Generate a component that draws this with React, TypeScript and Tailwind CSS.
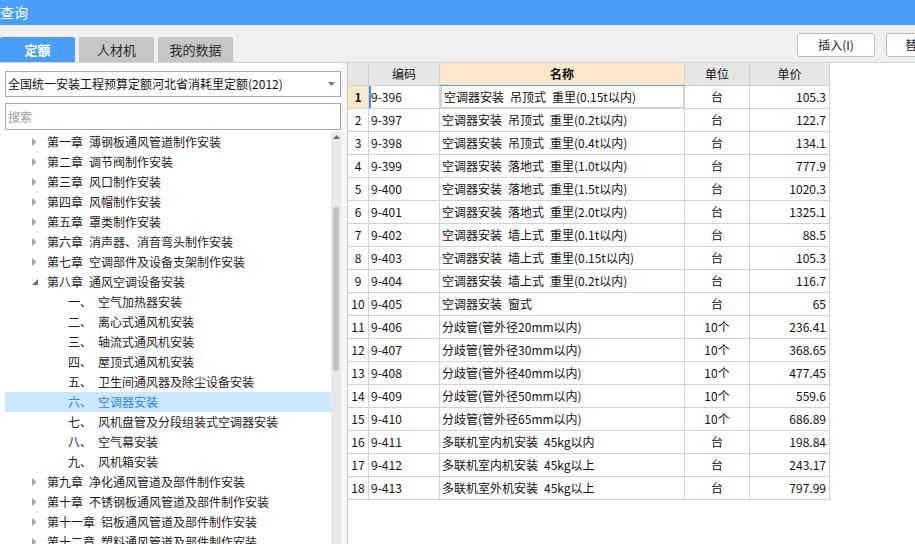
import React from 'react';

const FONT = { fontFamily: '"Noto Sans CJK SC", "Liberation Sans", sans-serif' };

type Row = { code: string; name: string; unit: string; price: string };

const rows: Row[] = [
  { code: '9-396', name: '空调器安装 吊顶式 重里(0.15t以内)', unit: '台', price: '105.3' },
  { code: '9-397', name: '空调器安装 吊顶式 重里(0.2t以内)', unit: '台', price: '122.7' },
  { code: '9-398', name: '空调器安装 吊顶式 重里(0.4t以内)', unit: '台', price: '134.1' },
  { code: '9-399', name: '空调器安装 落地式 重里(1.0t以内)', unit: '台', price: '777.9' },
  { code: '9-400', name: '空调器安装 落地式 重里(1.5t以内)', unit: '台', price: '1020.3' },
  { code: '9-401', name: '空调器安装 落地式 重里(2.0t以内)', unit: '台', price: '1325.1' },
  { code: '9-402', name: '空调器安装 墙上式 重里(0.1t以内)', unit: '台', price: '88.5' },
  { code: '9-403', name: '空调器安装 墙上式 重里(0.15t以内)', unit: '台', price: '105.3' },
  { code: '9-404', name: '空调器安装 墙上式 重里(0.2t以内)', unit: '台', price: '116.7' },
  { code: '9-405', name: '空调器安装 窗式', unit: '台', price: '65' },
  { code: '9-406', name: '分歧管(管外径20mm以内)', unit: '10个', price: '236.41' },
  { code: '9-407', name: '分歧管(管外径30mm以内)', unit: '10个', price: '368.65' },
  { code: '9-408', name: '分歧管(管外径40mm以内)', unit: '10个', price: '477.45' },
  { code: '9-409', name: '分歧管(管外径50mm以内)', unit: '10个', price: '559.6' },
  { code: '9-410', name: '分歧管(管外径65mm以内)', unit: '10个', price: '686.89' },
  { code: '9-411', name: '多联机室内机安装 45kg以内', unit: '台', price: '198.84' },
  { code: '9-412', name: '多联机室内机安装 45kg以上', unit: '台', price: '243.17' },
  { code: '9-413', name: '多联机室外机安装 45kg以上', unit: '台', price: '797.99' },
];

type TreeItem = { label: string; text: string; level: 0 | 1; expanded?: boolean; selected?: boolean };

const tree: TreeItem[] = [
  { label: '第一章', text: '薄钢板通风管道制作安装', level: 0 },
  { label: '第二章', text: '调节阀制作安装', level: 0 },
  { label: '第三章', text: '风口制作安装', level: 0 },
  { label: '第四章', text: '风帽制作安装', level: 0 },
  { label: '第五章', text: '罩类制作安装', level: 0 },
  { label: '第六章', text: '消声器、消音弯头制作安装', level: 0 },
  { label: '第七章', text: '空调部件及设备支架制作安装', level: 0 },
  { label: '第八章', text: '通风空调设备安装', level: 0, expanded: true },
  { label: '一、', text: '空气加热器安装', level: 1 },
  { label: '二、', text: '离心式通风机安装', level: 1 },
  { label: '三、', text: '轴流式通风机安装', level: 1 },
  { label: '四、', text: '屋顶式通风机安装', level: 1 },
  { label: '五、', text: '卫生间通风器及除尘设备安装', level: 1 },
  { label: '六、', text: '空调器安装', level: 1, selected: true },
  { label: '七、', text: '风机盘管及分段组装式空调器安装', level: 1 },
  { label: '八、', text: '空气幕安装', level: 1 },
  { label: '九、', text: '风机箱安装', level: 1 },
  { label: '第九章', text: '净化通风管道及部件制作安装', level: 0 },
  { label: '第十章', text: '不锈钢板通风管道及部件制作安装', level: 0 },
  { label: '第十一章', text: '铝板通风管道及部件制作安装', level: 0 },
  { label: '第十二章', text: '塑料通风管道及部件制作安装', level: 0 },
];

function TreeRow({ item }: { item: TreeItem }) {
  if (item.level === 1) {
    return (
      <div
        className={`h-[20px] flex items-center text-[12px] shrink-0 ${
          item.selected ? 'bg-[#cce8ff] text-[#2f86e0]' : 'text-[#1e1e1e]'
        }`}
      >
        <span className="w-[30px] ml-[63px]">{item.label}</span>
        <span>{item.text}</span>
      </div>
    );
  }
  return (
    <div className="h-[20px] flex items-center text-[12px] text-[#1e1e1e] shrink-0">
      <span className="w-[15px] ml-[27px] flex items-center">
        {item.expanded ? (
          <svg width="6" height="6" viewBox="0 0 6 6">
            <polygon points="6,0 6,6 0,6" fill="#6b6b6b" />
          </svg>
        ) : (
          <svg width="5" height="8" viewBox="0 0 5 8">
            <polygon points="0,0 4.5,4 0,8" fill="#a6a6a6" />
          </svg>
        )}
      </span>
      <span className="mr-[6px]">{item.label}</span>
      <span>{item.text}</span>
    </div>
  );
}

function Tab({ label, active }: { label: string; active?: boolean }) {
  return (
    <div
      className={`h-[25px] w-[76px] flex items-center justify-center rounded-t-[2px] text-[13px] ${
        active ? 'bg-[#4a9ef8] text-white font-bold w-[73px]' : 'bg-[#c6c6c6] text-[#2a2a2a]'
      }`}
    >
      {label}
    </div>
  );
}

export default function App() {
  return (
    <div className="w-[915px] h-[544px] overflow-hidden flex flex-col bg-white" style={FONT}>
      {/* title bar */}
      <div className="h-[25px] shrink-0 bg-[#4a9ef8] text-white text-[14px] flex items-center">查询</div>

      {/* tabs + buttons */}
      <div className="h-[38px] shrink-0 bg-[#f0f0f0] border-b border-[#d6d6d6] flex">
        <div className="flex items-end gap-[4px] shrink-0 w-[233px]">
          <Tab label="定额" active />
          <Tab label="人材机" />
          <Tab label="我的数据" />
        </div>
        <div className="flex gap-[11px] ml-[564px] mt-[8px] shrink-0">
          <button className="h-[24px] w-[78px] bg-white border border-[#bcbcbc] rounded-[3px] text-[12px] text-[#222]">
            插入(I)
          </button>
          <button className="h-[24px] w-[78px] bg-white border border-[#bcbcbc] rounded-[3px] text-[12px] text-[#222]">
            替换(R)
          </button>
        </div>
      </div>

      {/* body */}
      <div className="flex-1 flex min-h-0">
        {/* left panel */}
        <div className="w-[341px] shrink-0 flex flex-col pt-[8px] bg-white">
          <div className="ml-[5px] w-[336px] h-[26px] border border-[#ababab] bg-white flex items-center pl-[2px] pr-[5px] text-[12px] text-[#111]">
            <span className="flex-1">全国统一安装工程预算定额河北省消耗里定额(2012)</span>
            <svg width="7" height="4" viewBox="0 0 7 4">
              <polygon points="0,0 7,0 3.5,4" fill="#7a7a7a" />
            </svg>
          </div>
          <div className="ml-[5px] mt-[6px] w-[336px] h-[27px] border border-[#ababab] bg-white flex items-center pl-[2px] text-[12px] text-[#9a9a9a]">
            搜索
          </div>
          <div className="flex-1 flex mt-[2px] min-h-0">
            <div className="flex-1 flex flex-col pl-[5px] overflow-hidden">
              {tree.map((t, i) => (
                <TreeRow key={i} item={t} />
              ))}
            </div>
            <div className="w-[10px] bg-[#e8e8e8] flex flex-col items-center shrink-0">
              <svg className="mt-[3px]" width="7" height="4" viewBox="0 0 7 4">
                <polygon points="3.5,0 7,4 0,4" fill="#6e6e6e" />
              </svg>
              <div className="mt-[68px] w-[6px] h-[164px] rounded-[3px] bg-[#c2c2c2]" />
            </div>
          </div>
        </div>

        {/* splitter */}
        <div className="w-[6px] shrink-0 bg-[#f6f6f6]" />

        {/* table */}
        <div className="flex-1 bg-white border-l border-[#c4c4c4] min-w-0">
          <div className="grid grid-cols-[21px_71px_245px_65px_80px] text-[12px] text-[#111]">
            <div className="h-[23px] bg-[#e6e6e6] border-r border-b border-[#cfcfcf]" />
            <div className="h-[23px] bg-[#e6e6e6] border-r border-b border-[#cfcfcf] flex items-center justify-center">
              编码
            </div>
            <div className="h-[23px] bg-[#fde7ca] border-r border-b border-r-[#cfcfcf] border-b-[#5ba2ec] flex items-center justify-center font-bold">
              名称
            </div>
            <div className="h-[23px] bg-[#e6e6e6] border-r border-b border-[#cfcfcf] flex items-center justify-center">
              单位
            </div>
            <div className="h-[23px] bg-[#e6e6e6] border-r border-b border-[#cfcfcf] flex items-center justify-center">
              单价
            </div>
            {rows.map((r, i) => {
              const first = i === 0;
              return (
                <React.Fragment key={r.code}>
                  <div
                    className={`h-[23px] border-r border-b border-[#d2d2d2] flex items-center justify-center ${
                      first ? 'bg-[#fde7ca] font-bold' : 'bg-white'
                    }`}
                  >
                    {i + 1}
                  </div>
                  <div
                    className={`h-[23px] border-r border-b border-[#d2d2d2] flex items-center pl-[2px] ${
                      first ? 'shadow-[inset_2px_0_0_#3d8ef0]' : ''
                    }`}
                  >
                    {r.code}
                  </div>
                  <div
                    className={`h-[23px] border-b border-[#d2d2d2] flex items-center pl-[2px] whitespace-pre overflow-hidden ${
                      first ? 'border-r-2 border-l-2 border-b-2 border-[#737373] pl-0' : 'border-r'
                    }`}
                  >
                    {r.name.replace(/ /g, '\u2002')}
                  </div>
                  <div className="h-[23px] border-r border-b border-[#d2d2d2] flex items-center justify-center">
                    {r.unit}
                  </div>
                  <div className="h-[23px] border-r border-b border-[#d2d2d2] flex items-center justify-end pr-[3px]">
                    {r.price}
                  </div>
                </React.Fragment>
              );
            })}
          </div>
        </div>
      </div>
    </div>
  );
}
